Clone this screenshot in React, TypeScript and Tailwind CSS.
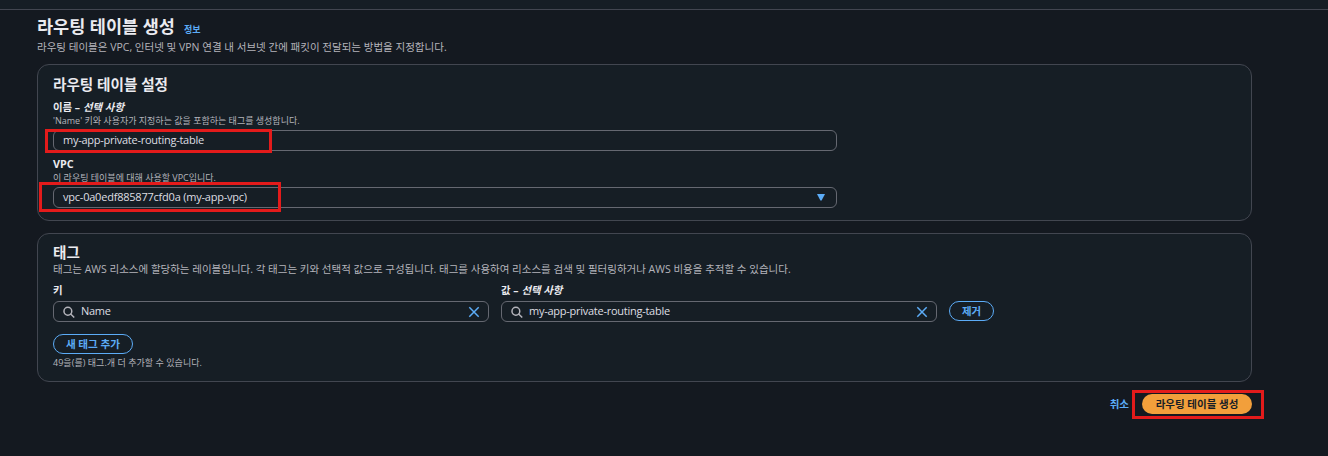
import type { ReactNode } from 'react';

function SearchIcon() {
  return (
    <svg viewBox="0 0 16 16" className="h-3 w-3 shrink-0" fill="none" stroke="#b4b4bb" strokeWidth="2">
      <circle cx="6.5" cy="7" r="5.2" />
      <path d="m15 15.3-4.8-4.6" />
    </svg>
  );
}

function ClearIcon() {
  return (
    <svg viewBox="0 0 12 12" className="h-3 w-3 shrink-0" fill="none" stroke="#5cacf7" strokeWidth="1.5">
      <path d="m1.3 1.3 9.4 9.4M10.7 1.3 1.3 10.7" />
    </svg>
  );
}

function Panel({ className, children }: { className: string; children: ReactNode }) {
  return (
    <section className={`flex flex-col rounded-xl border border-[#424650] bg-[#161e25] pl-[15px] ${className}`}>
      {children}
    </section>
  );
}

function TagField({ value }: { value: string }) {
  return (
    <div className="flex h-[21px] w-[436px] items-center rounded-md border border-[#656871] pr-2 pl-[9px] font-normal">
      <SearchIcon />
      <span className="ml-1.5 grow text-[11px] tracking-[-0.26px] text-[#dedee3]">{value}</span>
      <ClearIcon />
    </div>
  );
}

export default function App() {
  return (
    <div className="h-[456px] w-[1328px] overflow-hidden bg-[#141920] font-['Open_Sans','Noto_Sans_CJK_KR',sans-serif] whitespace-nowrap text-[#b4b4bb]">
      <div className="h-2.5 border-b border-[#424650] bg-[#161e25]" />
      <main className="ml-[37px] w-[1215px]">
        <header className="h-[54px] pt-1">
          <div className="flex h-6 items-center">
            <h1 className="text-[17.5px] font-bold text-[#ebebf0]">라우팅 테이블 생성</h1>
            <a className="mt-2 ml-[9px] text-[9px] font-bold text-[#5cacf7]">정보</a>
          </div>
          <p className="flex h-5 items-center text-[10.52px]">
            라우팅 테이블은 VPC, 인터넷 및 VPN 연결 내 서브넷 간에 패킷이 전달되는 방법을 지정합니다.
          </p>
        </header>

        <div className="relative">
          <Panel className="h-[157px] pt-[9px]">
            <h2 className="flex h-[21px] items-center text-[14.6px] font-bold text-[#ebebf0]">라우팅 테이블 설정</h2>
            <label className="mt-[5px] flex h-[15px] items-center gap-[3px] text-[10.4px] font-bold text-[#ebebf0]">
              이름 – <i>선택 사항</i>
            </label>
            <p className="flex h-[11px] items-center text-[9px]">'Name' 키와 사용자가 지정하는 값을 포함하는 태그를 생성합니다.</p>
            <div className="mt-1 flex h-[21px] w-[784px] items-center rounded-md border border-[#656871] px-[9px] text-[11px] text-[#dedee3]">
              <span className="tracking-[-0.26px]">my-app-private-routing-table</span>
            </div>
            <label className="mt-1.5 flex h-[15px] items-center text-[10.8px] font-bold text-[#ebebf0]">VPC</label>
            <p className="flex h-[11px] items-center text-[9px]">이 라우팅 테이블에 대해 사용할 VPC입니다.</p>
            <div className="mt-1 flex h-[21px] w-[784px] items-center justify-between rounded-md border border-[#656871] px-[9px] text-[11px] text-[#dedee3]">
              <span className="tracking-[-0.22px]">vpc-0a0edf885877cfd0a (my-app-vpc)</span>
              <svg viewBox="0 0 8 7" className="mr-0.5 h-[7px] w-2" fill="#5cacf7">
                <path d="M0 0h8L4.6 6.4h-1.2Z" />
              </svg>
            </div>
          </Panel>
          <div className="absolute top-[65px] left-2 h-[24px] w-[227px] border-3 border-[#e31b1b]" />
          <div className="absolute top-[118px] left-[2px] h-[30px] w-[242px] border-3 border-[#e31b1b]" />
        </div>

        <Panel className="mt-3 h-[149px] pt-[9px]">
          <h2 className="flex h-5 items-center text-[14.6px] font-bold text-[#ebebf0]">태그</h2>
          <p className="flex h-[14px] items-center text-[10.5px]">
            태그는 AWS 리소스에 할당하는 레이블입니다. 각 태그는 키와 선택적 값으로 구성됩니다. 태그를 사용하여 리소스를 검색 및 필터링하거나 AWS 비용을 추적할 수 있습니다.
          </p>
          <div className="mt-[5px] flex items-end gap-3 text-[10.4px] font-bold">
            <div>
              <label className="mb-px flex h-[18px] items-center text-[#ebebf0]">키</label>
              <TagField value="Name" />
            </div>
            <div>
              <label className="mb-px flex h-[18px] items-center gap-[3px] text-[#ebebf0]">
                값 – <i>선택 사항</i>
              </label>
              <TagField value="my-app-private-routing-table" />
            </div>
            <button className="mb-px flex h-5 w-[45px] items-center justify-center rounded-full border border-[#5cacf7] pt-px text-[#5cacf7]">제거</button>
          </div>
          <button className="mt-3 flex h-5 w-20 shrink-0 items-center justify-center rounded-full border border-[#5cacf7] pt-px text-[10.6px] font-bold text-[#5cacf7]">
            새 태그 추가
          </button>
          <p className="mt-0.5 flex h-[14px] items-center text-[9px] tracking-[0.04px]">49을(를) 태그.개 더 추가할 수 있습니다.</p>
        </Panel>

        <footer className="mt-3 flex items-center justify-end gap-[13px] text-[10.5px] font-bold">
          <a className="pt-px text-[#5cacf7]">취소</a>
          <div className="relative">
            <button className="flex h-5 w-[110px] items-center justify-center rounded-full bg-[#f29f3b] pt-px text-[#161d26]">라우팅 테이블 생성</button>
            <div className="absolute -top-1 -left-[10px] h-[29px] w-[132px] border-3 border-[#e31b1b]" />
          </div>
        </footer>
      </main>
    </div>
  );
}
